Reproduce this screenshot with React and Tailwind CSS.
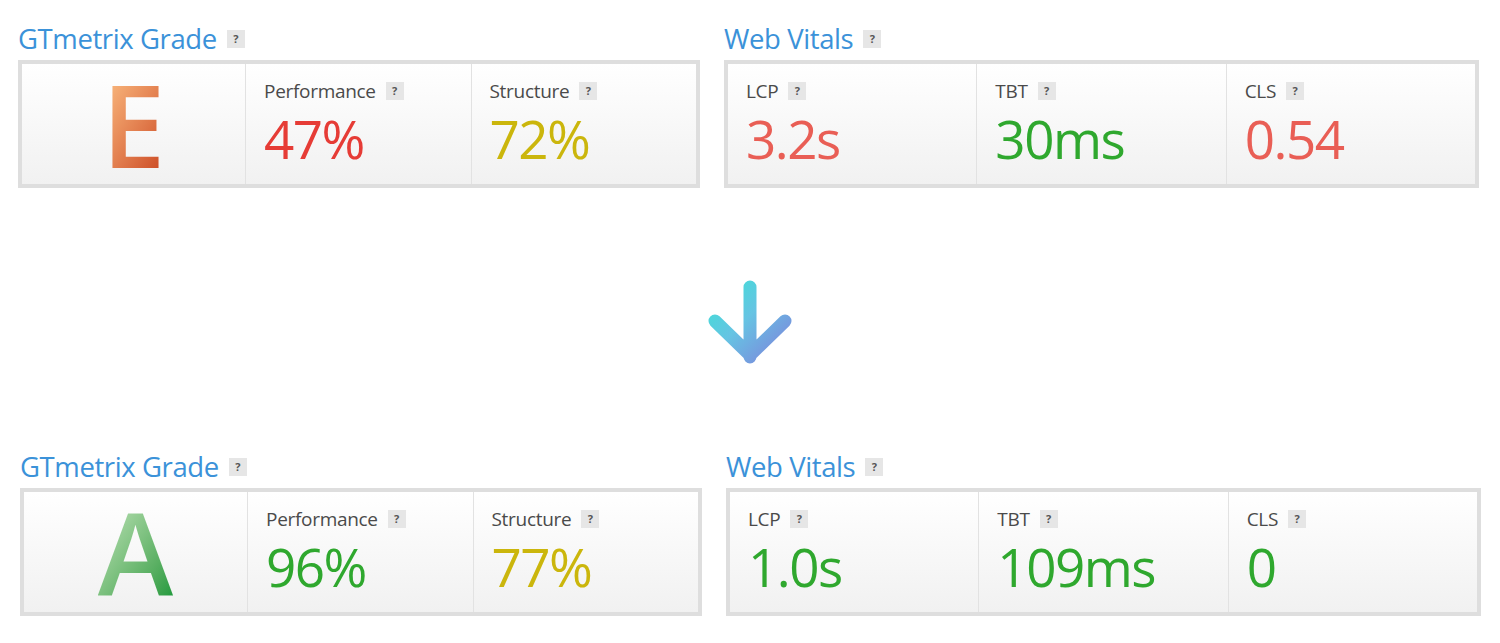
import React from "react";

const FONT = { fontFamily: '"Open Sans", "Noto Sans", sans-serif' };

function Help() {
  return (
    <span className="inline-flex items-center justify-center w-[18px] h-[18px] bg-[#e6e6e6] text-[#555] text-[11px] font-bold">
      ?
    </span>
  );
}

function Title({ children }) {
  return (
    <div className="flex items-center gap-[10px] h-[34px]">
      <span className="text-[27.5px] leading-[32px] text-[#3b92d9] tracking-[-0.4px]">{children}</span>
      <Help />
    </div>
  );
}

function Metric({ label, value, color, last }) {
  return (
    <div className={`flex-1 pl-[18px] pt-[15px] ${last ? "" : "border-r border-[#e2e2e2]"}`}>
      <div className="flex items-center gap-[10px] h-[24px]">
        <span className="text-[19px] leading-[24px] text-[#4a4a4a] tracking-[-0.3px]">{label}</span>
        <Help />
      </div>
      <div className={`text-[53px] leading-[58px] mt-[7px] tracking-[-1.5px] ${color}`}>{value}</div>
    </div>
  );
}

function Panel({ children, className }) {
  return (
    <div className={`h-[128px] border-4 border-[#dedede] bg-gradient-to-b from-white to-[#f1f1f1] flex ${className}`}>
      {children}
    </div>
  );
}

function Row({ grade, gradeClass, perf, perfColor, struct, structColor, lcp, lcpColor, tbt, tbtColor, cls, clsColor, shift }) {
  return (
    <div className={`flex ${shift ? "pl-[2px]" : ""}`}>
      <div className="w-[682px] flex flex-col gap-[4px]">
        <Title>GTmetrix Grade</Title>
        <Panel className="w-[682px]">
          <div className="w-[224px] border-r border-[#e2e2e2] flex items-center justify-center">
            <span className={`text-[114px] leading-[100px] font-semibold bg-clip-text text-transparent ${gradeClass}`}>
              {grade}
            </span>
          </div>
          <Metric label="Performance" value={perf} color={perfColor} />
          <Metric label="Structure" value={struct} color={structColor} last />
        </Panel>
      </div>
      <div className="w-[755px] ml-[24px] flex flex-col gap-[4px]">
        <Title>Web Vitals</Title>
        <Panel className="w-[755px]">
          <Metric label="LCP" value={lcp} color={lcpColor} />
          <Metric label="TBT" value={tbt} color={tbtColor} />
          <Metric label="CLS" value={cls} color={clsColor} last />
        </Panel>
      </div>
    </div>
  );
}

function Arrow() {
  return (
    <svg width="100" height="96" viewBox="0 0 100 96" fill="none">
      <defs>
        <linearGradient id="arr" x1="0" y1="0" x2="1" y2="1">
          <stop offset="0" stopColor="#3fe0d6" />
          <stop offset="0.45" stopColor="#66c4e3" />
          <stop offset="1" stopColor="#7d84dc" />
        </linearGradient>
      </defs>
      <path
        d="M50 14 V84 M15 48 L50 82 L85 48"
        stroke="url(#arr)"
        strokeWidth="13"
        strokeLinecap="round"
        strokeLinejoin="round"
      />
    </svg>
  );
}

export default function App() {
  return (
    <div className="w-[1500px] h-[643px] bg-white pl-[18px] pt-[22px] overflow-hidden" style={FONT}>
      <Row
        grade="E"
        gradeClass="bg-gradient-to-br from-[#fcc185] to-[#c9441f]"
        perf="47%"
        perfColor="text-[#e63c36]"
        struct="72%"
        structColor="text-[#cbb60c]"
        lcp="3.2s"
        lcpColor="text-[#e95e55]"
        tbt="30ms"
        tbtColor="text-[#2fa82e]"
        cls="0.54"
        clsColor="text-[#e95e55]"
      />
      <div className="flex justify-center h-[262px] items-center -ml-[18px] pt-[4px]">
        <Arrow />
      </div>
      <Row
        shift
        grade="A"
        gradeClass="bg-gradient-to-br from-[#c3e6bd] to-[#16983a]"
        perf="96%"
        perfColor="text-[#2fa82e]"
        struct="77%"
        structColor="text-[#cbb60c]"
        lcp="1.0s"
        lcpColor="text-[#2fa82e]"
        tbt="109ms"
        tbtColor="text-[#2fa82e]"
        cls="0"
        clsColor="text-[#2fa82e]"
      />
    </div>
  );
}
